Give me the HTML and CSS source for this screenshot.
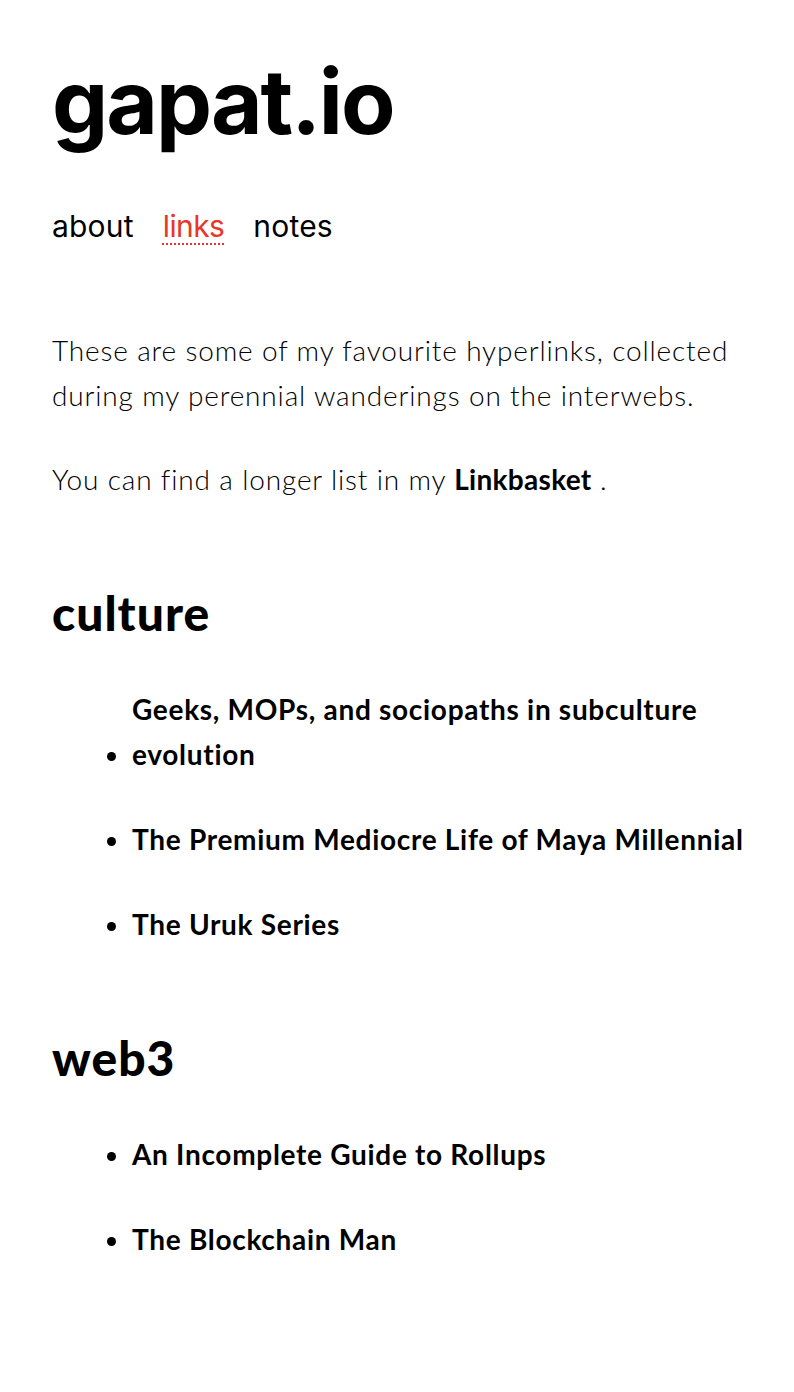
FILE: index.html
```html
<!DOCTYPE html>
<html lang="en">
<head>
<meta charset="utf-8">
<title>links — gapat.io</title>
<link rel="stylesheet" href="styles.css">
</head>
<body>
<div class="page">
  <header class="site-header">
    <h1 class="site-title">gapat.io</h1>
    <nav class="site-nav">
      <a class="nav-link" href="#">about</a>
      <a class="nav-link active" href="#">links</a>
      <a class="nav-link" href="#">notes</a>
    </nav>
  </header>
  <main class="content">
    <p class="intro">These are some of my favourite hyperlinks, collected during my perennial wanderings on the interwebs.</p>
    <p class="intro">You can find a longer list in my <a class="strong-link" href="#">Linkbasket</a> .</p>

    <section class="group">
      <h2 class="group-title">culture</h2>
      <ul class="link-list">
        <li><a class="item-link" href="#">Geeks, MOPs, and sociopaths in subculture evolution</a></li>
        <li><a class="item-link" href="#">The Premium Mediocre Life of Maya Millennial</a></li>
        <li><a class="item-link" href="#">The Uruk Series</a></li>
      </ul>
    </section>

    <section class="group">
      <h2 class="group-title">web3</h2>
      <ul class="link-list">
        <li><a class="item-link" href="#">An Incomplete Guide to Rollups</a></li>
        <li><a class="item-link" href="#">The Blockchain Man</a></li>
      </ul>
    </section>
  </main>
</div>
</body>
</html>
```

FILE: styles.css
```css
html, body {
  margin: 0;
  padding: 0;
  background: #ffffff;
  color: #000000;
}

.page {
  padding: 52px 40px 60px 52px;
  font-family: "Lato", "Liberation Sans", sans-serif;
}

.site-title {
  margin: 0;
  font-family: "Inter", "Liberation Sans", sans-serif;
  font-weight: 700;
  font-size: 89px;
  line-height: 100px;
  letter-spacing: -2px;
}

.site-nav {
  display: flex;
  gap: 29px;
  margin-top: 54px;
  font-family: "Inter", "Liberation Sans", sans-serif;
  font-size: 30px;
  line-height: 40px;
  letter-spacing: 0.2px;
}

.nav-link {
  color: #000;
  text-decoration: none;
}

.nav-link.active {
  color: #e8362a;
  letter-spacing: -0.6px;
  text-decoration: underline dotted #e8362a;
  text-underline-offset: 6px;
  text-decoration-thickness: 2px;
}

.content {
  margin-top: 82px;
}

.intro {
  margin: 0 0 39px;
  font-weight: 300;
  font-size: 28px;
  line-height: 45px;
  letter-spacing: 0.85px;
  color: #000;
}

.strong-link {
  color: #000;
  font-weight: 700;
  letter-spacing: 0.3px;
  text-decoration: none;
}

.group {
  margin-top: 84px;
}

.group-title {
  margin: 0;
  font-weight: 900;
  font-size: 48px;
  line-height: 54px;
  letter-spacing: 1px;
}

.link-list {
  margin: 47px 0 0;
  padding-left: 80px;
}

.link-list li {
  font-size: 28px;
  line-height: 45px;
  margin-bottom: 40px;
}

.item-link {
  display: inline-block;
  color: #000;
  font-weight: 700;
  letter-spacing: 0.7px;
  text-decoration: none;
}
```
